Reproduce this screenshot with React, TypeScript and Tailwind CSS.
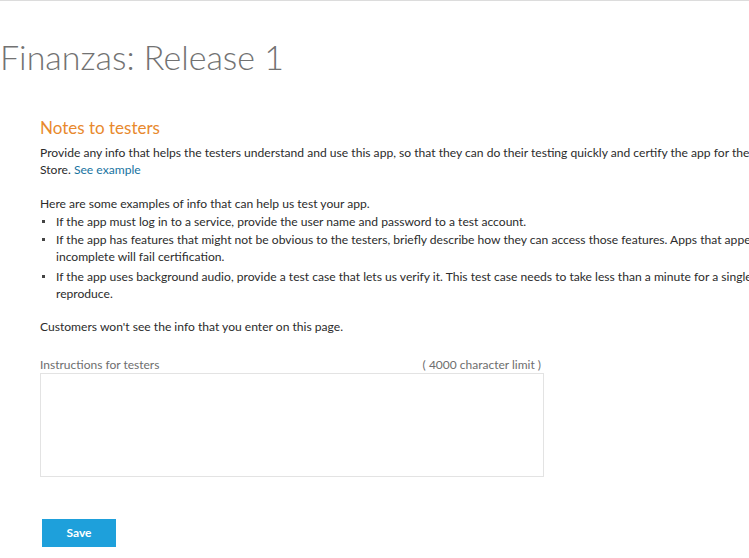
function Bullet({ children, className = '' }: { children: React.ReactNode; className?: string }) {
  return (
    <li className={`flex ${className}`}>
      <span className="flex h-[17px] w-[16px] shrink-0 items-center pl-[2px]">
        <span className="h-[3px] w-[3px] bg-[#444]" />
      </span>
      <span>{children}</span>
    </li>
  )
}

export default function App() {
  return (
    <div className="h-[558px] w-[749px] overflow-hidden bg-white font-['Lato',sans-serif] text-[#2b2b2b]">
      <div className="border-t border-[#dcdcdc]" />

      {/* page title */}
      <h1 className="mt-[35px] text-[34px] leading-[42px] font-light text-[#727272]">
        Finanzas: Release 1
      </h1>

      <div className="mt-[39px] w-[900px] pl-[40px]">
        <h2 className="text-[17px] leading-[22px] text-[#e8892d]">Notes to testers</h2>

        <p className="mt-[5px] text-[12.1px] leading-[17px]">
          Provide any info that helps the testers understand and use this app, so that they can do
          their testing quickly and certify the app for the
          <br />
          Store. <a href="#" className="text-[#17739f]">See example</a>
        </p>

        <p className="mt-[17px] text-[12.1px] leading-[17px]">
          Here are some examples of info that can help us test your app.
        </p>
        <ul className="mt-[1px] flex flex-col gap-[1px] text-[12.1px] leading-[17px]">
          <Bullet>If the app must log in to a service, provide the user name and password to a test account.</Bullet>
          <Bullet>
            If the app has features that might not be obvious to the testers, briefly describe how
            they can access those features. Apps that appear
            <br />
            incomplete will fail certification.
          </Bullet>
          <Bullet className="mt-[2px]">
            If the app uses background audio, provide a test case that lets us verify it. This test
            case needs to take less than a minute for a single person to
            <br />
            reproduce.
          </Bullet>
        </ul>

        <p className="mt-[16px] text-[12.1px] leading-[17px]">
          Customers won't see the info that you enter on this page.
        </p>

        {/* instructions field */}
        <div className="mt-[23px] w-[504px]">
          <div className="flex justify-between pr-[3px] text-[12px] leading-[14px] text-[#6e6e6e]">
            <span>Instructions for testers</span>
            <span>( 4000 character limit )</span>
          </div>
          <textarea className="mt-[1px] block h-[104px] w-full resize-none border border-[#e3e3e3] outline-none" />
        </div>

        <button className="mt-[42px] ml-[2px] h-[28px] w-[74px] bg-[#1ea0db] text-[12px] font-bold text-white">
          Save
        </button>
      </div>
    </div>
  )
}
